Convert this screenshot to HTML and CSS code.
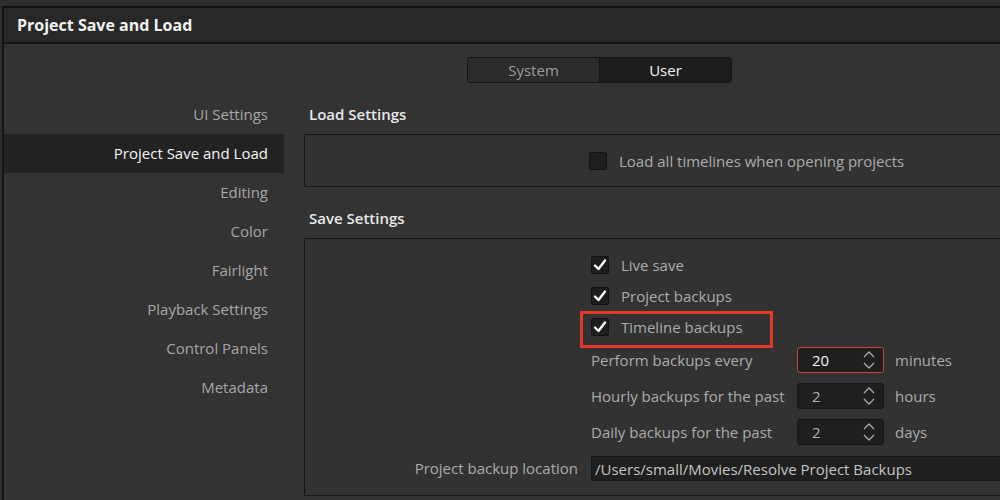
FILE: index.html
```html
<!DOCTYPE html>
<html>
<head>
<title>Project Save and Load</title>
<meta name=viewport content="width=device-width, initial-scale=1">
<link rel="stylesheet" href="styles.css">
</head>
<body>
<div class="window">
<div class="titlebar">Project Save and Load</div>
<div class="main">
  <div class="sidebar">
    <div class="nav-item">UI Settings</div>
    <div class="nav-item active">Project Save and Load</div>
    <div class="nav-item">Editing</div>
    <div class="nav-item">Color</div>
    <div class="nav-item">Fairlight</div>
    <div class="nav-item">Playback Settings</div>
    <div class="nav-item">Control Panels</div>
    <div class="nav-item">Metadata</div>
  </div>
  <div class="content">
    <div class="tabs">
      <div class="tab">System</div>
      <div class="tab active">User</div>
    </div>

    <div class="section-title">Load Settings</div>
    <div class="group group-load">
      <div class="check-row">
        <span class="checkbox"></span>
        <span class="check-label">Load all timelines when opening projects</span>
      </div>
    </div>

    <div class="section-title">Save Settings</div>
    <div class="group group-save">
      <div class="row row-check">
        <span></span>
        <div class="check-row">
          <span class="checkbox checked"><svg viewBox="0 0 18 18"><path d="M4 9.5 L7.5 13 L14 4.5" /></svg></span>
          <span class="check-label">Live save</span>
        </div>
      </div>
      <div class="row row-check">
        <span></span>
        <div class="check-row">
          <span class="checkbox checked"><svg viewBox="0 0 18 18"><path d="M4 9.5 L7.5 13 L14 4.5" /></svg></span>
          <span class="check-label">Project backups</span>
        </div>
      </div>
      <div class="row row-check">
        <span></span>
        <div class="check-row highlighted">
          <span class="checkbox checked"><svg viewBox="0 0 18 18"><path d="M4 9.5 L7.5 13 L14 4.5" /></svg></span>
          <span class="check-label">Timeline backups</span>
          <span class="callout"></span>
        </div>
      </div>
      <div class="row row-field">
        <span></span>
        <div class="spin-row">
          <span class="field-label">Perform backups every</span>
          <div class="spin focused"><span class="spin-value">20</span><svg class="spin-arrows" viewBox="0 0 16 22"><path d="M3 8 L8 3 L13 8 M3 14 L8 19 L13 14" /></svg></div>
          <span class="unit">minutes</span>
        </div>
      </div>
      <div class="row row-field">
        <span></span>
        <div class="spin-row">
          <span class="field-label">Hourly backups for the past</span>
          <div class="spin"><span class="spin-value">2</span><svg class="spin-arrows" viewBox="0 0 16 22"><path d="M3 8 L8 3 L13 8 M3 14 L8 19 L13 14" /></svg></div>
          <span class="unit">hours</span>
        </div>
      </div>
      <div class="row row-field">
        <span></span>
        <div class="spin-row">
          <span class="field-label">Daily backups for the past</span>
          <div class="spin"><span class="spin-value">2</span><svg class="spin-arrows" viewBox="0 0 16 22"><path d="M3 8 L8 3 L13 8 M3 14 L8 19 L13 14" /></svg></div>
          <span class="unit">days</span>
        </div>
      </div>
      <div class="row row-field">
        <span class="row-label">Project backup location</span>
        <div class="path-input">/Users/small/Movies/Resolve Project Backups</div>
      </div>
    </div>
  </div>
</div>
</div>
</body>
</html>
```

FILE: styles.css
```css
html, body {
    margin: 0;
    height: 100%;
}
body {
    background-color: #2e2e2e;
    font-family: "Open Sans", "Noto Sans", sans-serif;
    overflow: hidden;
}
.window {
    margin: 6px 0 0 2px;
    height: 492px;
    border-top: 2px solid #121212;
    border-left: 2px solid #141414;
    background-color: #333333;
}
.titlebar {
    height: 34px;
    line-height: 34px;
    padding-left: 13px;
    background-color: #282828;
    border-bottom: 2px solid #141414;
    color: #f2f2f2;
    font-size: 16px;
    font-weight: 700;
}
.main {
    display: flex;
}
.sidebar {
    width: 280px;
    flex: none;
    padding-top: 51px;
}
.nav-item {
    height: 39px;
    line-height: 39px;
    padding-right: 16px;
    text-align: right;
    color: #a6a6a6;
    font-size: 15px;
}
.nav-item.active {
    background-color: #222222;
    color: #f4f4f4;
}
.content {
    flex: 1;
    min-width: 0;
    margin-left: 20px;
}
.tabs {
    display: flex;
    width: 265px;
    height: 26px;
    margin: 13px 0 0 163px;
    border: 1px solid #151515;
    border-radius: 3px;
    box-sizing: border-box;
    overflow: hidden;
}
.tab {
    flex: 1;
    text-align: center;
    line-height: 24px;
    font-size: 15px;
    color: #9a9a9a;
    background-color: #2b2b2b;
}
.tab.active {
    background-color: #1d1d1d;
    color: #f4f4f4;
    border-left: 1px solid #151515;
}
.section-title {
    height: 39px;
    line-height: 39px;
    padding-left: 5px;
    color: #e8e8e8;
    font-size: 15px;
    font-weight: 600;
}
.tabs + .section-title {
    margin-top: 12px;
}
/* the boxes run on past the right edge of the window */
.group {
    border: 1px solid #161616;
    border-right: none;
    border-radius: 2px 0 0 2px;
    background-color: #323232;
}
.group-load {
    height: 51px;
    display: flex;
    align-items: center;
    padding-left: 284px;
    margin-bottom: 12px;
}
.group-save {
    height: 246px;
    padding-top: 10px;
}
.check-row {
    position: relative;
    display: flex;
    align-items: center;
    gap: 12px;
}
.checkbox {
    width: 18px;
    height: 18px;
    box-sizing: border-box;
    border: 1px solid #121212;
    border-radius: 2px;
    background-color: #1e1e1e;
    display: flex;
}
.checkbox svg {
    width: 18px;
    height: 18px;
    margin: -1px;
}
.checkbox path {
    fill: none;
    stroke: #ffffff;
    stroke-width: 2.4;
    stroke-linecap: round;
    stroke-linejoin: round;
}
.check-label, .field-label, .unit, .row-label {
    color: #ababab;
    font-size: 15px;
}
.row {
    display: grid;
    grid-template-columns: 273px 1fr;
    column-gap: 13px;
    align-items: center;
}
.row-check {
    height: 31px;
}
.row-field {
    height: 36px;
}
.row-label {
    text-align: right;
}
/* red annotation box drawn over the row */
.callout {
    position: absolute;
    left: -11px;
    top: -6px;
    width: 193px;
    height: 37px;
    box-sizing: border-box;
    border: 3px solid #e5382b;
}
.spin-row {
    display: grid;
    grid-template-columns: 195px 87px 1fr;
    column-gap: 11px;
    align-items: center;
}
.spin {
    height: 26px;
    box-sizing: border-box;
    border: 1px solid #141414;
    border-radius: 3px;
    background-color: #1f1f1f;
    display: flex;
    align-items: center;
    justify-content: space-between;
    padding: 0 6px 0 14px;
}
.spin.focused {
    border-color: #c4473b;
}
.spin-value {
    color: #b0b0b0;
    font-size: 15px;
}
.spin.focused .spin-value {
    color: #f4f4f4;
}
.spin-arrows {
    width: 16px;
    height: 22px;
}
.spin-arrows path {
    fill: none;
    stroke: #a8a8a8;
    stroke-width: 1.4;
}
.path-input {
    height: 25px;
    line-height: 24px;
    box-sizing: border-box;
    padding-left: 3px;
    border: 1px solid #141414;
    border-right: none;
    border-radius: 2px 0 0 2px;
    background-color: #1f1f1f;
    color: #c4c4c4;
    font-size: 15px;
    white-space: nowrap;
}
```
